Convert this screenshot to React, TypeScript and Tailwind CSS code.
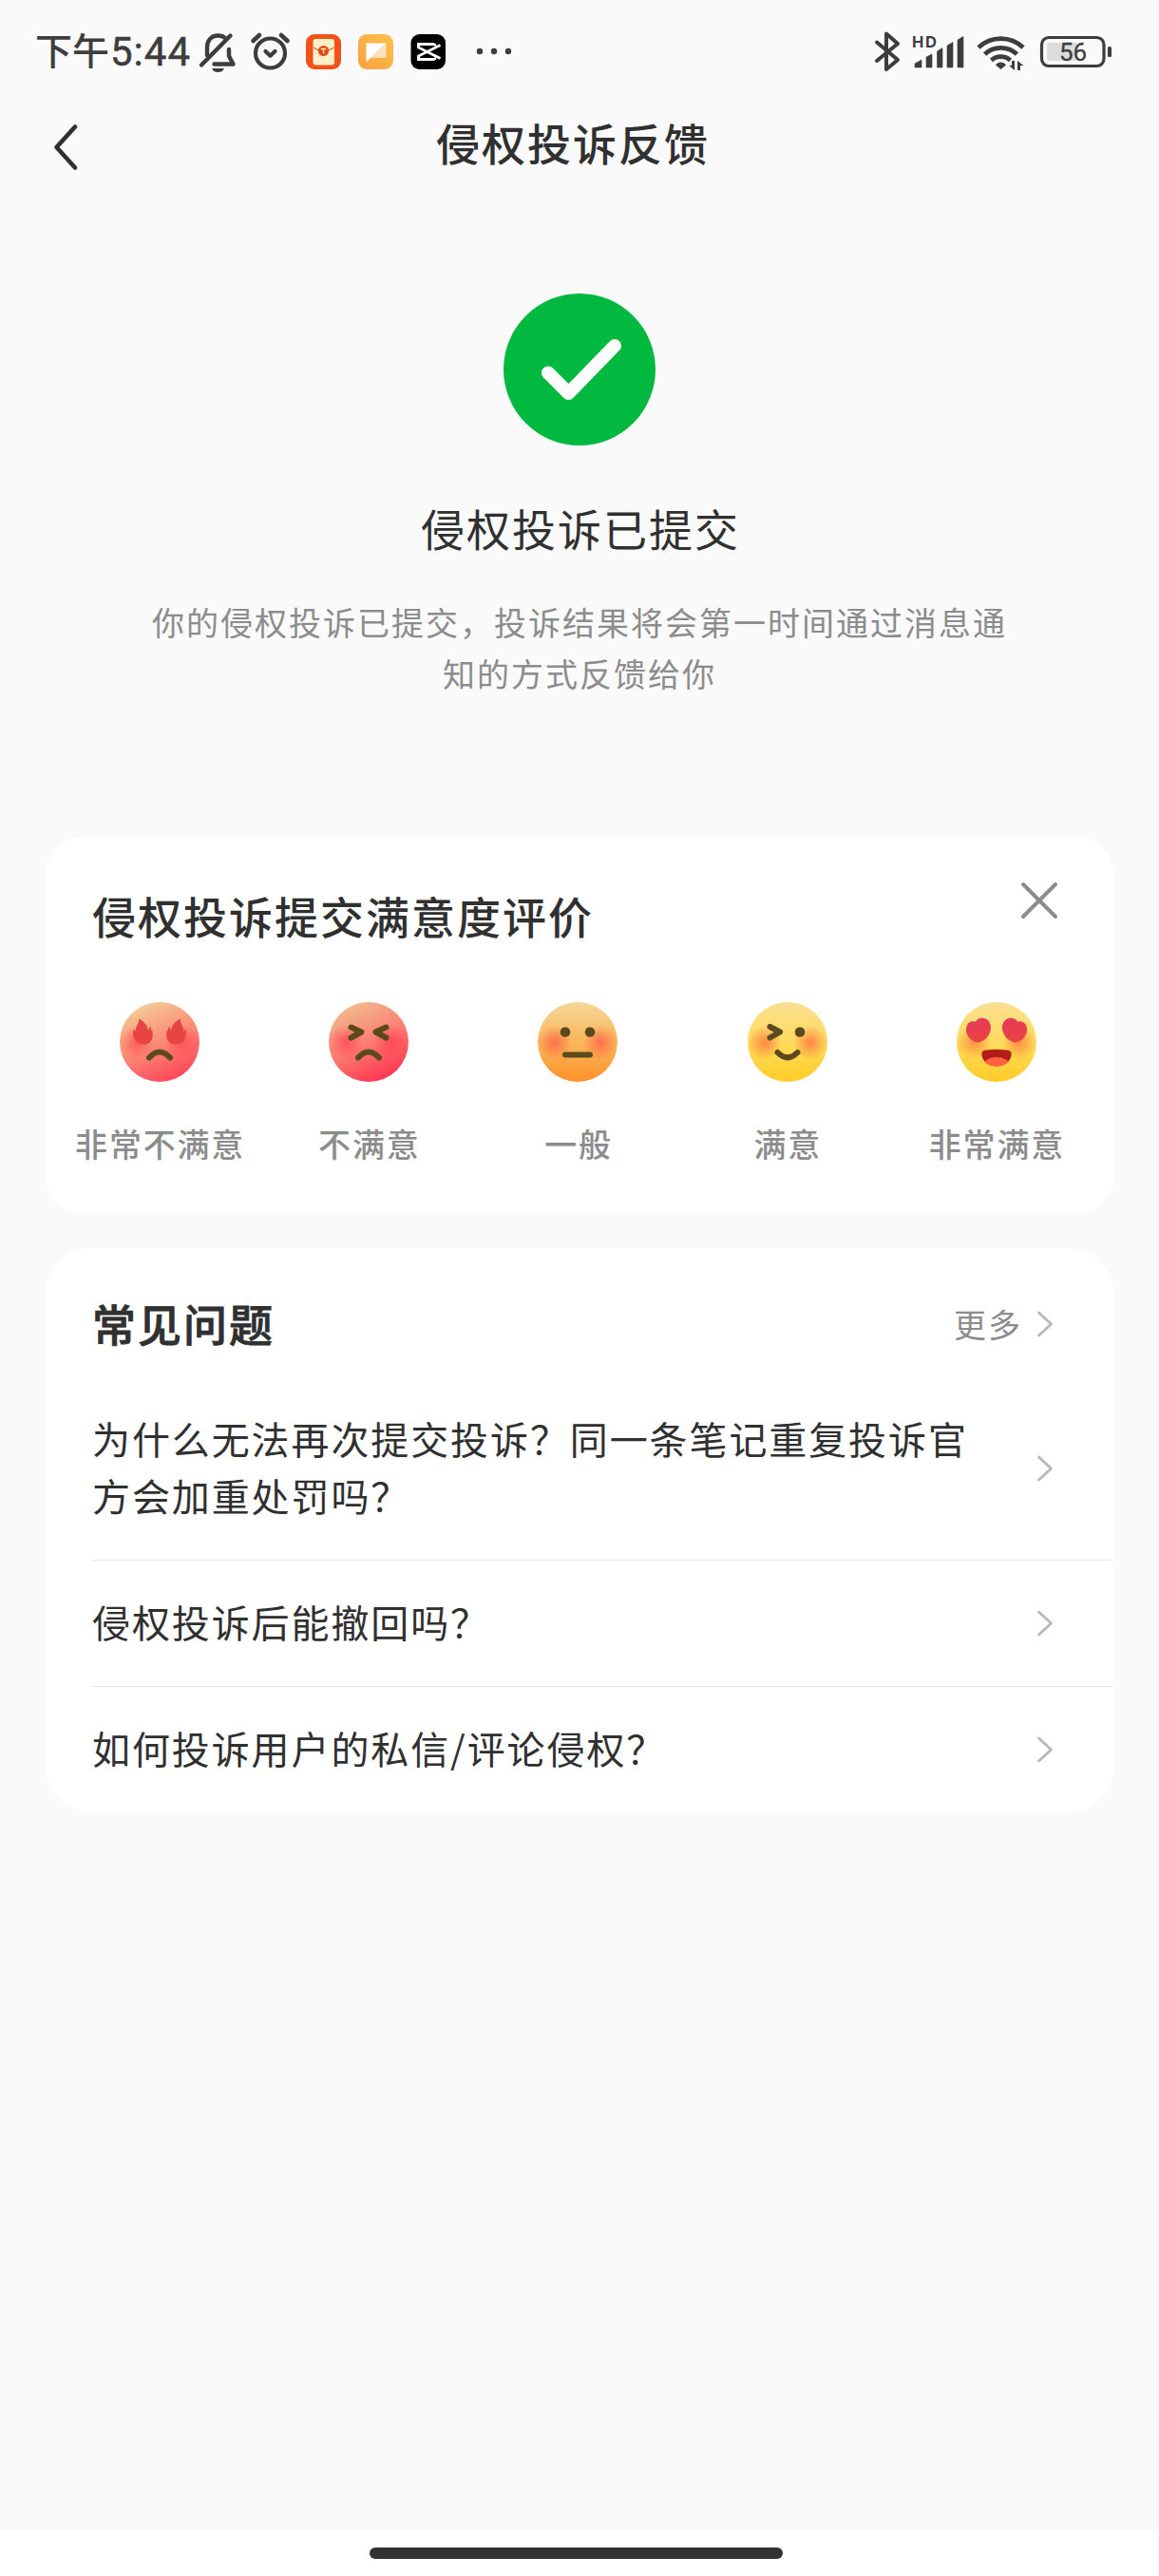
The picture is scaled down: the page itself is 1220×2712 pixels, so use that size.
import type { ReactNode } from "react";

const BROWN = "#5c4a1e";

/* === Status bar === */
function StatusBar() {
  return (
    <div className="flex h-[110px] items-start text-[#3d3d3d]">
      <div className="ml-[37px] mt-[25px] flex h-[60px] items-center whitespace-nowrap font-['Roboto','Noto_Sans_CJK_SC',sans-serif] text-[42px] leading-[60px]">
        <span className="text-[39px] font-medium">下午</span>
        <span className="ml-[1px] tracking-[1px] [-webkit-text-stroke:0.5px]">5:44</span>
      </div>
      <svg className="absolute left-[204px] top-[24px]" width="350" height="60" viewBox="204 24 350 60" fill="none">
        {/* muted bell */}
        <g stroke="#3d3d3d" strokeWidth="4.400" strokeLinecap="round" strokeLinejoin="round">
          <path d="M218 58V50c0-7 4-12.500 11.500-12.500 3.500 0 6.500 1.200 8.500 3.500" />
          <path d="M241 52v7l4.500 8.500h-20" />
          <path d="M212 68.500L242.500 37.500" />
        </g>
        <path d="M223 72h13c-1.500 3-3.500 4-6.500 4s-5-1-6.500-4z" fill="#3d3d3d" />
        {/* alarm */}
        <circle cx="284.500" cy="56" r="15.500" stroke="#3d3d3d" strokeWidth="4.200" />
        <path d="M279.500 54l5 4.800 5-4.800" stroke="#3d3d3d" strokeWidth="4.200" strokeLinecap="round" strokeLinejoin="round" />
        <path d="M266.500 43l6.500-6M302.500 43l-6.500-6" stroke="#3d3d3d" strokeWidth="4.600" strokeLinecap="round" />
        {/* red packet */}
        <rect x="322" y="36" width="37" height="37" rx="9" fill="#f4511a" />
        <rect x="329.500" y="41" width="22.500" height="27.500" rx="3" fill="#ffefc9" />
        <path d="M330 50c4 2.500 7 4 10.700 4s7-1.500 10.700-4" stroke="#c9622a" strokeWidth="1.300" />
        <circle cx="340.500" cy="53.500" r="5.600" fill="#e04a1a" />
        <path d="M337.800 51.500h5.400M340.500 51.500v5" stroke="#ffe2a8" strokeWidth="1.300" />
        {/* note */}
        <rect x="377" y="36" width="37" height="37" rx="9" fill="url(#note)" />
        <path d="M385.500 45.500h21l-21 20z" fill="#fff" />
        <path d="M406.500 45.500v15.500h-16z" fill="#ffe2bb" />
        {/* video editor */}
        <rect x="432.500" y="36" width="36.500" height="37" rx="9" fill="#000" />
        <path
          d="M463.500 47.500L440.500 59v3.500H456l3-1M463.500 61.500L440.500 50v-3.500H456l3 1"
          stroke="#fff"
          strokeWidth="2.800"
        />
        <circle cx="505" cy="54" r="3.200" fill="#3d3d3d" />
        <circle cx="520" cy="54" r="3.200" fill="#3d3d3d" />
        <circle cx="535" cy="54" r="3.200" fill="#3d3d3d" />
        <defs>
          <linearGradient id="note" x1="0" y1="1" x2="1" y2="0">
            <stop stopColor="#f7a13c" />
            <stop offset="1" stopColor="#ffc04d" />
          </linearGradient>
        </defs>
      </svg>
      <svg className="absolute left-[915px] top-[24px]" width="260" height="60" viewBox="915 24 260 60" fill="none">
        <path
          d="M923 44.500l22 18.500-12 10V35.500l12 10.500-22 18"
          stroke="#3d3d3d"
          strokeWidth="4"
          strokeLinecap="round"
          strokeLinejoin="round"
        />
        <path
          d="M963 71v-4l7-4v8zM975 71V60l6-3v14zM986.500 71V54l5.500-3.500V71zM997 71V48l6-3.500V71zM1008 71V42l6-3.500V71z"
          fill="#3d3d3d"
          stroke="#3d3d3d"
          strokeWidth="0.600"
          strokeLinejoin="round"
        />
        <g stroke="#3d3d3d" strokeWidth="4.800">
          <path d="M1030 50a34 34 0 0 1 47 0" />
          <path d="M1036.500 57a25 25 0 0 1 34 0" />
          <path d="M1043.500 63.500a15 15 0 0 1 20 0" />
        </g>
        <path d="M1048 68.500c2.500-4 8.500-4 11 0l-5.500 4.500z" fill="#3d3d3d" />
        <path d="M1068 64v10l-6-5h3v-5zM1071 74V64l6.500 5h-3.500v5z" fill="#3d3d3d" />
        <rect x="1096.500" y="39.500" width="65.500" height="30" rx="7.500" stroke="#3d3d3d" strokeWidth="3.200" />
        <path d="M1102 48a3 3 0 0 1 3-3h28v19h-28a3 3 0 0 1-3-3z" fill="#dcdcdc" />
        <rect x="1166" y="49" width="4" height="11" rx="1.500" fill="#3d3d3d" />
        <text x="960" y="50" fontSize="16.500" fontWeight="700" textLength="26" fill="#3d3d3d" fontFamily="Inter, sans-serif">HD</text>
        <text x="1129.500" y="64" fontSize="26" textAnchor="middle" fill="#3d3d3d" stroke="#3d3d3d" strokeWidth="0.300" fontFamily="Roboto, sans-serif">56</text>
      </svg>
    </div>
  );
}

/* === Emoji faces === */
type FaceProps = { id: string; from: string; mid: string; to: string; blush: string; tilt?: boolean; children: ReactNode };

function Face({ id, from, mid, to, blush, tilt, children }: FaceProps) {
  return (
    <svg className="size-[84px]" viewBox="0 0 84 84" fill="none">
      <defs>
        <linearGradient id={`${id}-bg`} x1={tilt ? "0.25" : "0.5"} y1="0" x2={tilt ? "0.7" : "0.5"} y2="1">
          <stop stopColor={from} />
          <stop offset="0.5" stopColor={mid} />
          <stop offset="1" stopColor={to} />
        </linearGradient>
        <radialGradient id={`${id}-blush`}>
          <stop stopColor={blush} stopOpacity="0.75" />
          <stop offset="0.35" stopColor={blush} stopOpacity="0.5" />
          <stop offset="1" stopColor={blush} stopOpacity="0" />
        </radialGradient>
        <clipPath id={`${id}-clip`}>
          <circle cx="42" cy="42" r="42" />
        </clipPath>
      </defs>
      <circle cx="42" cy="42" r="42" fill={`url(#${id}-bg)`} />
      <g clipPath={`url(#${id}-clip)`}>
        <circle cx="18" cy="42.500" r="18" fill={`url(#${id}-blush)`} />
        <circle cx="66" cy="42.500" r="18" fill={`url(#${id}-blush)`} />
      </g>
      {children}
    </svg>
  );
}

const FLAME = "M20.500 17C23 20 28.500 22 30 29.500c1-1 1.800-2.500 1.800-4.500 1 1.500 1.400 3 1.500 5.500l1-1c1.800 9-1.300 15-9.300 15-7.500 0-12.500-6.500-10.500-16 1 .8 1.700 1.700 2.200 2.800-.5-5.800 3.800-8.300 3.800-14.300z";
const HEART = "M19.500 42C13 39 9.500 34 10 28c.5-6 5-9 10-7.300 2-4 6.500-4.500 10.500-3.200 4.500 2 6.500 7.500 5 13C33.500 37 29.500 40.500 24 42.200c-2 .5-3 .3-4.500-.2z";

const ratings = [
  {
    label: "非常不满意",
    face: (
      <Face id="furious" from="#f3cf97" mid="#fb8c76" to="#ff4258" blush="#ff4a52" tilt>
        <path d={FLAME} fill="#e84343" />
        <path d={FLAME} fill="#e84343" transform="translate(84 0) scale(-1 1)" />
        <path d="M31 58.500q11-12 22 0" stroke={BROWN} strokeWidth="6" strokeLinecap="round" />
      </Face>
    ),
  },
  {
    label: "不满意",
    face: (
      <Face id="upset" from="#f2bd90" mid="#fb7f72" to="#ff3150" blush="#ff3f55" tilt>
        <g stroke={BROWN} strokeWidth="6" strokeLinecap="round" strokeLinejoin="round">
          <path d="M23.500 26.500L34.500 31.500l-11 6" />
          <path d="M60.500 26.500L49.500 31.500l11 6" />
          <path d="M31 58.500q11-12 22 0" />
        </g>
      </Face>
    ),
  },
  {
    label: "一般",
    face: (
      <Face id="neutral" from="#f4d798" mid="#fbb65a" to="#ff922c" blush="#ff5a45">
        <circle cx="29" cy="31.500" r="5.300" fill={BROWN} />
        <circle cx="55" cy="31.500" r="5.300" fill={BROWN} />
        <path d="M29 55.500h26" stroke={BROWN} strokeWidth="6" strokeLinecap="round" />
      </Face>
    ),
  },
  {
    label: "满意",
    face: (
      <Face id="happy" from="#fbdf92" mid="#fddc5c" to="#ffcc28" blush="#ff6a3c">
        <circle cx="55" cy="31.500" r="5.300" fill={BROWN} />
        <g stroke={BROWN} strokeWidth="6" strokeLinecap="round" strokeLinejoin="round">
          <path d="M23.500 26l10.500 5.500-10.500 6" />
          <path d="M31.500 53q10.500 10.500 21 0" />
        </g>
      </Face>
    ),
  },
  {
    label: "非常满意",
    face: (
      <Face id="love" from="#fbdf92" mid="#fddc5c" to="#ffcc28" blush="#ff7a3c">
        <linearGradient id="heart" x1="0" y1="0" x2="0" y2="1">
          <stop stopColor="#e63a5b" />
          <stop offset="1" stopColor="#ea4340" />
        </linearGradient>
        <path d={HEART} fill="url(#heart)" />
        <path d={HEART} fill="url(#heart)" transform="translate(84 0) scale(-1 1)" />
        <clipPath id="mouth">
          <path d="M31 50.500q11-1.500 22 0c3.500.3 5 2 4.600 5C56.500 63 50.500 67.500 42 67.500S27.500 63 26.400 55.500c-.4-3 1.100-4.700 4.600-5z" />
        </clipPath>
        <g clipPath="url(#mouth)">
          <rect x="24" y="48" width="36" height="22" fill="#b21d17" />
          <ellipse cx="42" cy="66.500" rx="14" ry="8.500" fill="#ff6142" />
        </g>
      </Face>
    ),
  },
];

const questions = [
  "为什么无法再次提交投诉？同一条笔记重复投诉官方会加重处罚吗？",
  "侵权投诉后能撤回吗？",
  "如何投诉用户的私信/评论侵权？",
];

function Chevron() {
  return (
    <svg className="h-[28px] w-[18px] shrink-0" viewBox="0 0 18 28" fill="none">
      <path d="M2.500 2L15.500 14 2.500 26" stroke="#b8b8b8" strokeWidth="2.800" strokeLinecap="round" strokeLinejoin="round" />
    </svg>
  );
}

export default function App() {
  return (
    <div className="relative flex h-[2712px] w-[1220px] flex-col bg-[#fafafa] font-['Noto_Sans_CJK_SC',sans-serif] text-[#303030]">
      <StatusBar />

      {/* === Header === */}
      <header className="flex h-[90px] items-center">
        <svg className="ml-[54px] h-[52px] w-[30px]" viewBox="0 0 30 52" fill="none">
          <path d="M25 4.500L5.500 26 25 47.500" stroke="#303030" strokeWidth="4.600" strokeLinecap="round" strokeLinejoin="round" />
        </svg>
        <h1 className="-mt-[12px] ml-[375px] text-[46px] font-medium leading-[60px] tracking-[2px]">侵权投诉反馈</h1>
      </header>

      {/* === Result === */}
      <section className="flex flex-col items-center pt-[109px]">
        <svg className="size-[160px]" viewBox="0 0 160 160" fill="none">
          <circle cx="80" cy="80" r="80" fill="#02b940" />
          <path d="M47 83.500L68.500 105 117 55" stroke="#fff" strokeWidth="14" strokeLinecap="round" strokeLinejoin="round" />
        </svg>
        <h2 className="mt-[53px] pl-[2px] text-[46px] leading-[66px] tracking-[2px]">侵权投诉已提交</h2>
        <p className="mt-[40px] w-[912px] text-center text-[34px] leading-[54px] tracking-[2px] text-[#8c8c8c]">
          你的侵权投诉已提交，投诉结果将会第一时间通过消息通知的方式反馈给你
        </p>
      </section>

      {/* === Rating card === */}
      <section className="mx-12 mt-[145px] h-[397px] rounded-[40px] bg-white">
        <div className="flex h-[174px] items-start justify-between pl-[49px] pr-[57px]">
          <h3 className="mt-[49px] text-[46px] font-medium leading-[66px] tracking-[2px]">侵权投诉提交满意度评价</h3>
          <svg className="mt-[46px] size-[42px]" viewBox="0 0 42 42" fill="none">
            <path d="M4 4l34 34M38 4L4 38" stroke="#8c8c8c" strokeWidth="4" strokeLinecap="round" />
          </svg>
        </div>
        <div className="grid grid-cols-5 pl-[10px] pr-[13px]">
          {ratings.map((r) => (
            <div key={r.label} className="flex flex-col items-center">
              {r.face}
              <span className="mt-[40px] pl-[1px] text-[34px] font-medium leading-[50px] tracking-[1.800px] text-[#8c8c8c]">
                {r.label}
              </span>
            </div>
          ))}
        </div>
      </section>

      {/* === FAQ card === */}
      <section className="mx-12 mt-[36px] rounded-[48px] bg-white">
        <div className="flex h-[136px] items-center justify-between pl-[49px] pr-[63px] pt-[24px]">
          <h3 className="-mt-[2px] pb-[2px] text-[46px] font-medium leading-[66px] tracking-[2px] [-webkit-text-stroke:0.8px]">常见问题</h3>
          <div className="flex items-center gap-[15px]">
            <span className="text-[34px] leading-[50px] tracking-[2px] text-[#8c8c8c]">更多</span>
            <Chevron />
          </div>
        </div>
        {questions.map((q) => (
          <div key={q} className="ml-12 border-b border-[#e8e8e8] last:border-b-0">
            <div className="flex items-center justify-between py-[36px] pr-[63px]">
              <p className="-mt-[2px] w-[930px] pb-[2px] pl-[1px] text-[40px] leading-[60px] tracking-[1.900px]">{q}</p>
              <Chevron />
            </div>
          </div>
        ))}
      </section>

      {/* === Gesture bar === */}
      <div className="mt-auto flex h-[48px] justify-center bg-white pr-[7px] pt-[18px]">
        <div className="h-3 w-[435px] rounded-full bg-[#333333]" />
      </div>
    </div>
  );
}
